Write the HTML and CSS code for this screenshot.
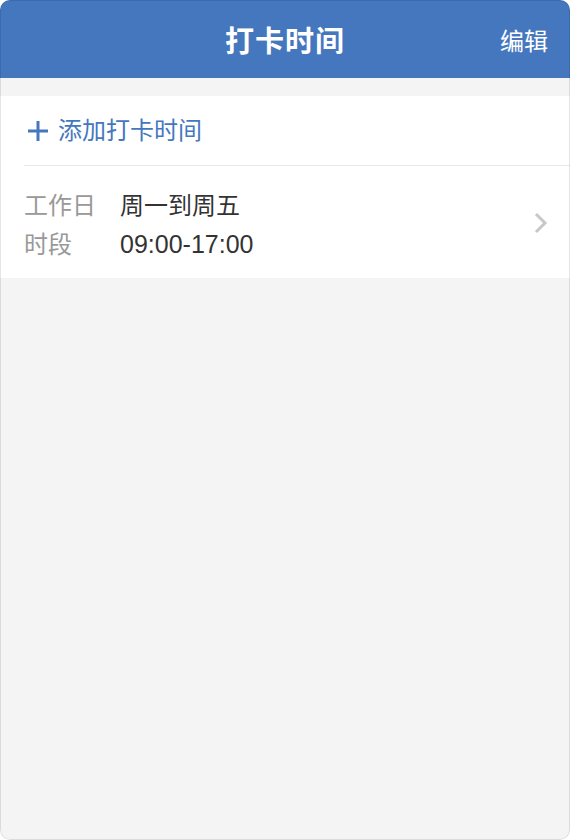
FILE: index.html
```html
<!DOCTYPE html>
<html lang="zh-CN">
<head>
    <meta charset="UTF-8">
    <meta name="viewport" content="width=device-width, initial-scale=1.0">
    <title>打卡时间</title>
    <link rel="stylesheet" href="styles.css">
</head>
<body>
    <div class="phone">
        <header class="nav-bar">
            <h1 class="nav-title">打卡时间</h1>
            <span class="nav-action">编辑</span>
        </header>
        <section class="card">
            <div class="add-row">
                <svg class="plus-icon" width="22" height="22" viewBox="0 0 22 22">
                    <path d="M11 1v20M1 11h20" stroke="#4577bf" stroke-width="3" fill="none"/>
                </svg>
                <span class="add-text">添加打卡时间</span>
            </div>
            <div class="time-row">
                <div class="time-info">
                    <div class="info-line">
                        <span class="info-label">工作日</span>
                        <span class="info-value">周一到周五</span>
                    </div>
                    <div class="info-line">
                        <span class="info-label">时段</span>
                        <span class="info-value time-value">09:00-17:00</span>
                    </div>
                </div>
                <svg class="chevron" width="14" height="22" viewBox="0 0 14 22">
                    <path d="M2 2l9 9-9 9" stroke="#c7c7cc" stroke-width="3" fill="none"/>
                </svg>
            </div>
        </section>
    </div>
</body>
</html>
```

FILE: styles.css
```css
body {
    margin: 0;
    padding: 0;
    background: #ffffff;
    font-family: "Liberation Sans", "Noto Sans CJK SC", sans-serif;
}
.phone {
    position: relative;
    width: 570px;
    height: 840px;
    box-sizing: border-box;
    background: #f4f4f4;
    border-radius: 10px;
    overflow: hidden;
}
.phone::after {
    content: "";
    position: absolute;
    top: 0;
    left: 0;
    right: 0;
    bottom: 0;
    border: 1px solid rgba(0, 0, 0, 0.1);
    border-radius: 10px;
    pointer-events: none;
}
.nav-bar {
    height: 78px;
    background: #4577bf;
    display: flex;
    align-items: center;
    justify-content: center;
    position: relative;
    color: #ffffff;
}
.nav-title {
    margin: 0;
    font-size: 29px;
    font-weight: bold;
    letter-spacing: 1px;
}
.nav-action {
    position: absolute;
    right: 22px;
    top: 50%;
    transform: translateY(-50%);
    font-size: 24px;
}
.card {
    margin-top: 18px;
    background: #ffffff;
}
.add-row {
    height: 69px;
    display: flex;
    align-items: center;
    border-bottom: 1px solid #e8e8e8;
    margin-left: 24px;
    padding-left: 3px;
}
.plus-icon {
    margin-right: 9px;
    margin-top: 1px;
}
.add-text {
    font-size: 24px;
    color: #4577bf;
    margin-bottom: 4px;
}
.time-row {
    display: flex;
    align-items: center;
    justify-content: space-between;
    padding: 20px 22px 14px 24px;
}
.info-line {
    display: flex;
    line-height: 39px;
    font-size: 24px;
}
.info-label {
    width: 96px;
    color: #999999;
}
.info-value {
    color: #333333;
}
.time-value {
    font-size: 25px;
}
.chevron {
    margin-top: -4px;
}
```
